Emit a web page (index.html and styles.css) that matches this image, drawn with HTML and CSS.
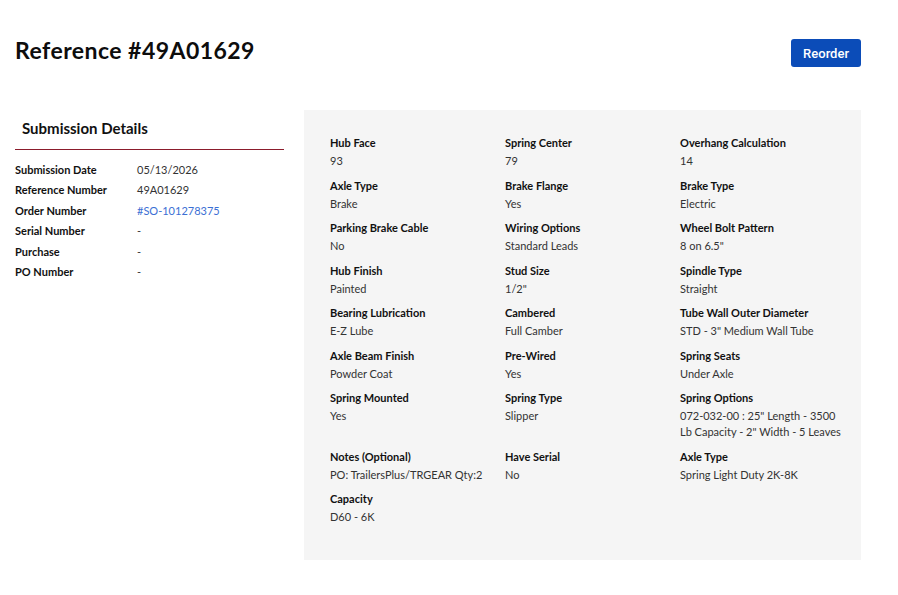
FILE: index.html
```html
<!DOCTYPE html>
<html lang="en">
<head>
<meta charset="utf-8">
<title>Reference #49A01629</title>
<link rel="stylesheet" href="styles.css">
</head>
<body>
<main class="page">
  <header class="page-head">
    <h1 class="page-title">Reference #49A01629</h1>
    <button class="btn-primary" type="button">Reorder</button>
  </header>

  <div class="layout">
    <section class="summary">
      <h2 class="summary-title">Submission Details</h2>
      <dl class="summary-list">
        <dt>Submission Date</dt><dd>05/13/2026</dd>
        <dt>Reference Number</dt><dd>49A01629</dd>
        <dt>Order Number</dt><dd><a class="link" href="#">#SO-101278375</a></dd>
        <dt>Serial Number</dt><dd>-</dd>
        <dt>Purchase</dt><dd>-</dd>
        <dt>PO Number</dt><dd>-</dd>
      </dl>
    </section>

    <section class="specs">
      <div class="spec"><div class="spec-label">Hub Face</div><div class="spec-value">93</div></div>
      <div class="spec"><div class="spec-label">Spring Center</div><div class="spec-value">79</div></div>
      <div class="spec"><div class="spec-label">Overhang Calculation</div><div class="spec-value">14</div></div>

      <div class="spec"><div class="spec-label">Axle Type</div><div class="spec-value">Brake</div></div>
      <div class="spec"><div class="spec-label">Brake Flange</div><div class="spec-value">Yes</div></div>
      <div class="spec"><div class="spec-label">Brake Type</div><div class="spec-value">Electric</div></div>

      <div class="spec"><div class="spec-label">Parking Brake Cable</div><div class="spec-value">No</div></div>
      <div class="spec"><div class="spec-label">Wiring Options</div><div class="spec-value">Standard Leads</div></div>
      <div class="spec"><div class="spec-label">Wheel Bolt Pattern</div><div class="spec-value">8 on 6.5"</div></div>

      <div class="spec"><div class="spec-label">Hub Finish</div><div class="spec-value">Painted</div></div>
      <div class="spec"><div class="spec-label">Stud Size</div><div class="spec-value">1/2"</div></div>
      <div class="spec"><div class="spec-label">Spindle Type</div><div class="spec-value">Straight</div></div>

      <div class="spec"><div class="spec-label">Bearing Lubrication</div><div class="spec-value">E-Z Lube</div></div>
      <div class="spec"><div class="spec-label">Cambered</div><div class="spec-value">Full Camber</div></div>
      <div class="spec"><div class="spec-label">Tube Wall Outer Diameter</div><div class="spec-value">STD - 3" Medium Wall Tube</div></div>

      <div class="spec"><div class="spec-label">Axle Beam Finish</div><div class="spec-value">Powder Coat</div></div>
      <div class="spec"><div class="spec-label">Pre-Wired</div><div class="spec-value">Yes</div></div>
      <div class="spec"><div class="spec-label">Spring Seats</div><div class="spec-value">Under Axle</div></div>

      <div class="spec"><div class="spec-label">Spring Mounted</div><div class="spec-value">Yes</div></div>
      <div class="spec"><div class="spec-label">Spring Type</div><div class="spec-value">Slipper</div></div>
      <div class="spec"><div class="spec-label">Spring Options</div><div class="spec-value">072-032-00 : 25" Length - 3500 Lb Capacity - 2" Width - 5 Leaves</div></div>

      <div class="spec"><div class="spec-label">Notes (Optional)</div><div class="spec-value">PO: TrailersPlus/TRGEAR Qty:2</div></div>
      <div class="spec"><div class="spec-label">Have Serial</div><div class="spec-value">No</div></div>
      <div class="spec"><div class="spec-label">Axle Type</div><div class="spec-value">Spring Light Duty 2K-8K</div></div>

      <div class="spec"><div class="spec-label">Capacity</div><div class="spec-value">D60 - 6K</div></div>
    </section>
  </div>
</main>
</body>
</html>
```

FILE: styles.css
```css
* {
  box-sizing: border-box;
}

body {
  margin: 0;
  background: #ffffff;
  color: #111111;
  font-family: Lato, "Liberation Sans", Arial, sans-serif;
}

.page {
  padding: 36px 37px 34px 15px;
}

.page-head {
  display: flex;
  align-items: flex-start;
  justify-content: space-between;
}

.page-title {
  margin: 0;
  font-size: 23px;
  font-weight: 700;
  letter-spacing: 0.45px;
  line-height: 28px;
  color: #0d0d0d;
}

.btn-primary {
  margin-top: 3px;
  border: 0;
  border-radius: 3px;
  background: #0b4cb8;
  color: #ffffff;
  font-family: Roboto, "Liberation Sans", Arial, sans-serif;
  font-size: 13px;
  font-weight: 500;
  height: 28px;
  padding: 0 12px;
  cursor: pointer;
}

.layout {
  display: flex;
  gap: 20px;
  margin-top: 43px;
  align-items: flex-start;
}

/* left summary column */
.summary {
  width: 269px;
  flex: none;
}

.summary-title {
  margin: 0;
  padding: 9px 0 11px 7px;
  font-size: 15px;
  font-weight: 700;
  line-height: 19px;
  border-bottom: 1px solid #8b1c2c;
}

.summary-list {
  display: grid;
  grid-template-columns: 122px 1fr;
  row-gap: 5px;
  margin: 12px 0 0;
  font-size: 11px;
  line-height: 15.4px;
}

.summary-list dt {
  font-weight: 700;
  color: #111111;
}

.summary-list dd {
  margin: 0;
  color: #333333;
}

.link {
  color: #3b6fd4;
  text-decoration: none;
}

/* right spec panel */
.specs {
  flex: 1;
  min-height: 450px;
  background: #f5f5f5;
  padding: 26px 5px 20px 26px;
  display: grid;
  grid-template-columns: repeat(3, 175px);
  row-gap: 9.5px;
  align-content: start;
}

.spec-label {
  font-size: 11px;
  font-weight: 700;
  line-height: 14px;
  color: #111111;
}

.spec-value {
  margin-top: 3px;
  font-size: 11px;
  line-height: 16px;
  color: #333333;
  padding-right: 14px;
}
```
